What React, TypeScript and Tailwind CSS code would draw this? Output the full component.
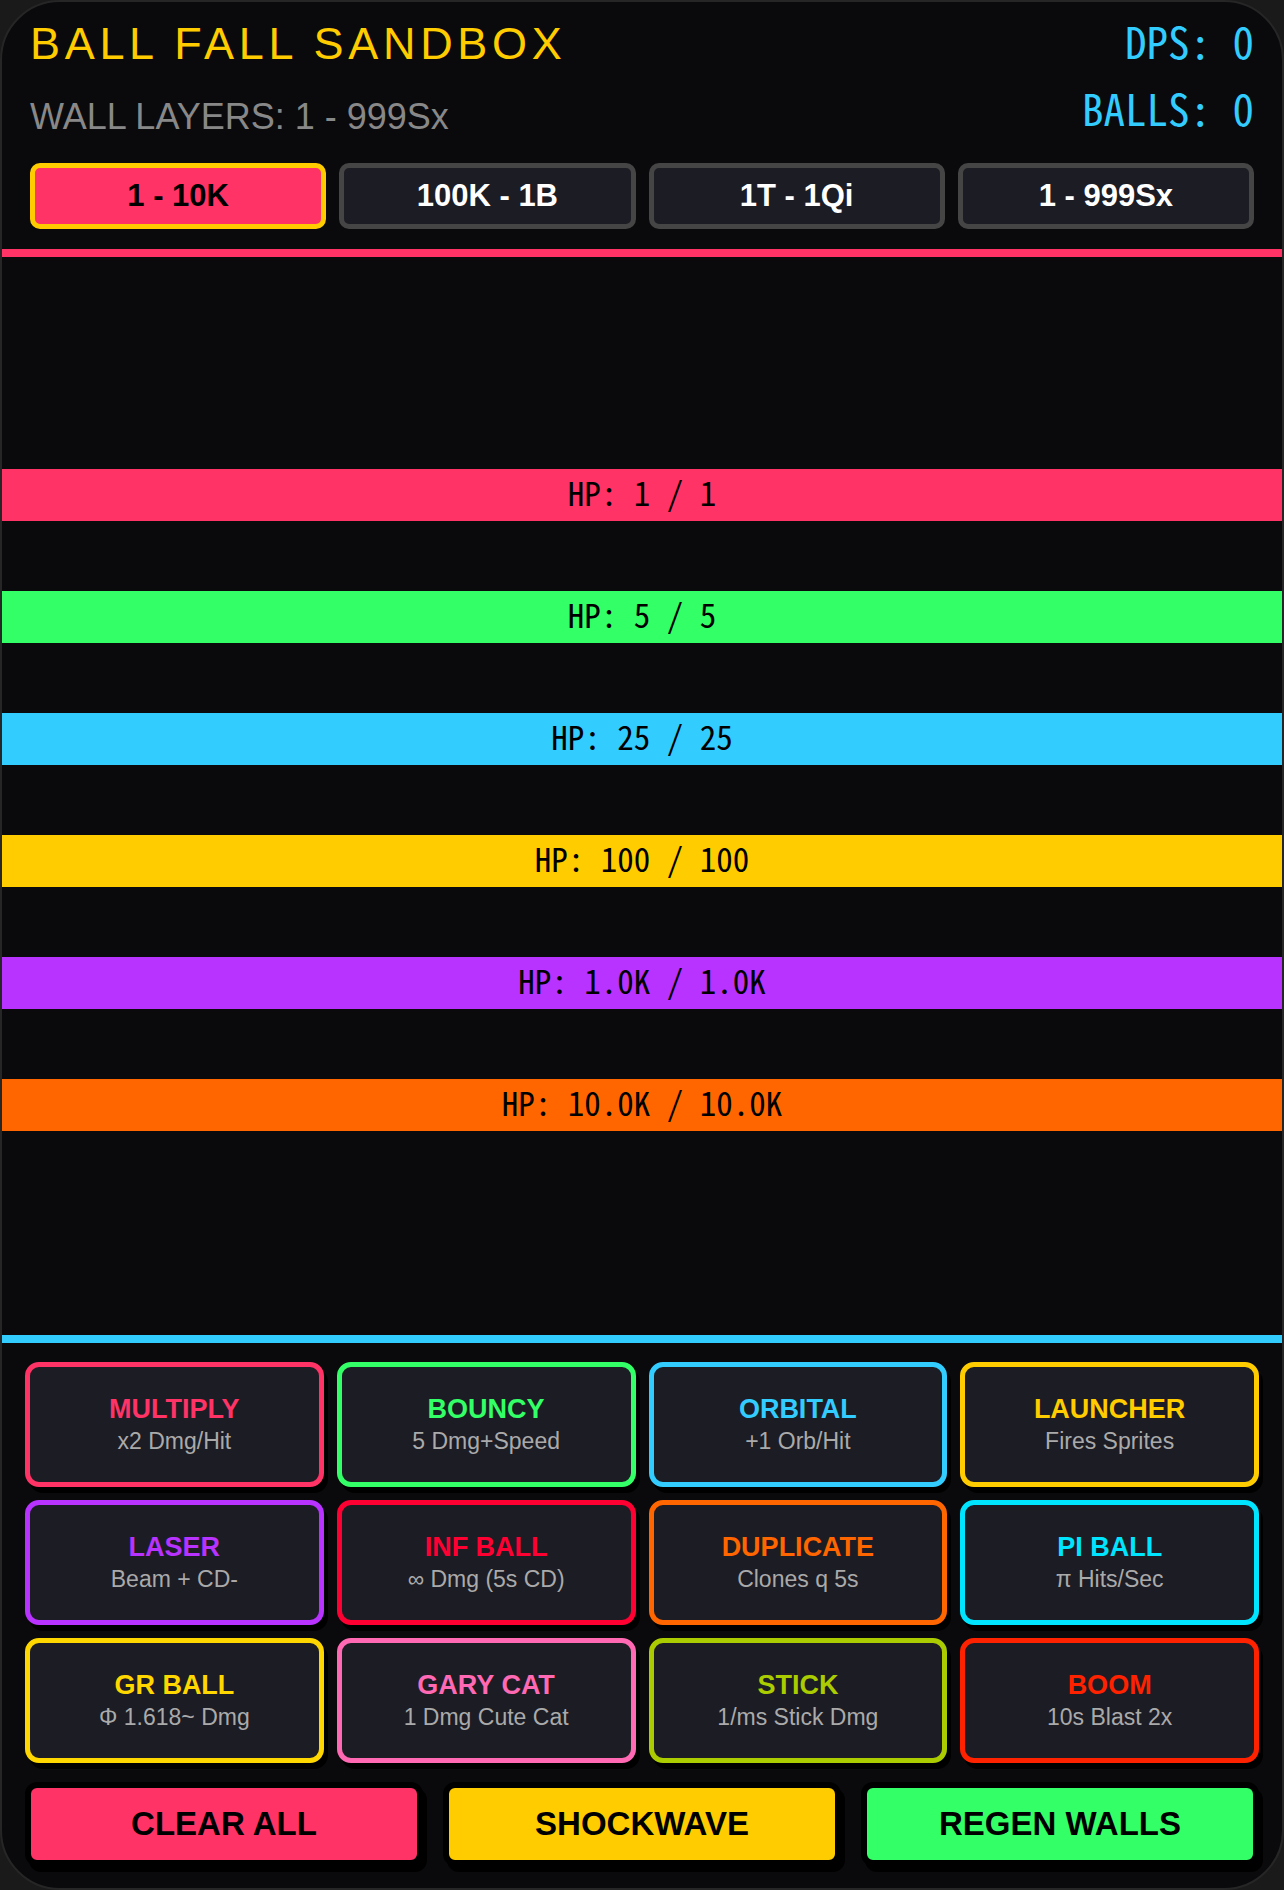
import React from "react";

const bars = [
  { c: "bg-[#ff3366]", t: "HP: 1 / 1" },
  { c: "bg-[#33ff66]", t: "HP: 5 / 5" },
  { c: "bg-[#33ccff]", t: "HP: 25 / 25" },
  { c: "bg-[#ffcc00]", t: "HP: 100 / 100" },
  { c: "bg-[#b833ff]", t: "HP: 1.0K / 1.0K" },
  { c: "bg-[#ff6600]", t: "HP: 10.0K / 10.0K" },
];

const cards = [
  { n: "MULTIPLY", d: "x2 Dmg/Hit", b: "border-[#ff3366]", t: "text-[#ff3366]" },
  { n: "BOUNCY", d: "5 Dmg+Speed", b: "border-[#33ff66]", t: "text-[#33ff66]" },
  { n: "ORBITAL", d: "+1 Orb/Hit", b: "border-[#33ccff]", t: "text-[#33ccff]" },
  { n: "LAUNCHER", d: "Fires Sprites", b: "border-[#ffcc00]", t: "text-[#ffcc00]" },
  { n: "LASER", d: "Beam + CD-", b: "border-[#b833ff]", t: "text-[#b833ff]" },
  { n: "INF BALL", d: "∞ Dmg (5s CD)", b: "border-[#ff0033]", t: "text-[#ff0033]" },
  { n: "DUPLICATE", d: "Clones q 5s", b: "border-[#ff6600]", t: "text-[#ff6600]" },
  { n: "PI BALL", d: "π Hits/Sec", b: "border-[#00e5ff]", t: "text-[#00e5ff]" },
  { n: "GR BALL", d: "Φ 1.618~ Dmg", b: "border-[#ffd700]", t: "text-[#ffd700]" },
  { n: "GARY CAT", d: "1 Dmg Cute Cat", b: "border-[#ff69b4]", t: "text-[#ff69b4]" },
  { n: "STICK", d: "1/ms Stick Dmg", b: "border-[#aacc00]", t: "text-[#aacc00]" },
  { n: "BOOM", d: "10s Blast 2x", b: "border-[#ff2200]", t: "text-[#ff2200]" },
];

const tabs = ["1 - 10K", "100K - 1B", "1T - 1Qi", "1 - 999Sx"];

export default function App() {
  return (
    <div className="w-[1284px] h-[1890px] bg-[#1a1a1a] font-['Liberation_Sans',Arial,sans-serif]">
      <div className="h-full rounded-[60px] border-2 border-[#262626] bg-[#0a0a0d] overflow-hidden flex flex-col">
        {/* header */}
        <div className="px-[28px] pt-[19px] pb-[20px]">
          <div className="flex justify-between items-start h-[116px]">
            <div className="flex flex-col">
              <div className="text-[45px] leading-[45px] tracking-[0.104em] text-[#ffcc00]">BALL FALL SANDBOX</div>
              <div className="mt-[31px] text-[36px] leading-[40px] text-[#888888]">WALL LAYERS: 1 - 999Sx</div>
            </div>
            <div className="flex flex-col items-end font-['Noto_Sans_Mono_CJK_SC','Noto_Sans_Mono_CJK_JP',monospace] text-[#33ccff] text-[43px]">
              <div className="leading-[48px] -mt-[5px]">DPS: 0</div>
              <div className="leading-[48px] mt-[19px]">BALLS: 0</div>
            </div>
          </div>
          <div className="mt-[26px] grid grid-cols-4 gap-[13px]">
            {tabs.map((t, i) => (
              <div
                key={t}
                className={
                  i === 0
                    ? "h-[66px] rounded-[10px] border-[5px] border-[#ffcc00] bg-[#ff3366] text-black font-bold text-[31px] flex items-center justify-center"
                    : "h-[66px] rounded-[10px] border-[5px] border-[#454545] bg-[#1c1c24] text-white font-bold text-[31px] flex items-center justify-center"
                }
              >
                {t}
              </div>
            ))}
          </div>
        </div>

        {/* game area */}
        <div className="relative flex-1 border-t-[8px] border-b-[8px] border-t-[#ff3366] border-b-[#33ccff] flex flex-col pt-[212px] gap-[70px] -mx-[2px]">
          {bars.map((b) => (
            <div
              key={b.t}
              className={`${b.c} h-[52px] pb-[6px] flex items-center justify-center font-['Noto_Sans_Mono_CJK_SC','Noto_Sans_Mono_CJK_JP',monospace] text-[33px] leading-[52px] text-black whitespace-pre`}
            >
              {b.t}
            </div>
          ))}
        </div>

        {/* panel */}
        <div className="px-[23px] pt-[19px] pb-[22px]">
          <div className="grid grid-cols-4 gap-[13px]">
            {cards.map((c) => (
              <div
                key={c.n}
                className={`h-[125px] rounded-[14px] border-[5px] ${c.b} bg-[#1c1c24] shadow-[4px_6px_0_#000] flex flex-col items-center justify-center`}
              >
                <div className={`${c.t} font-bold text-[27px] leading-[30px]`}>{c.n}</div>
                <div className="mt-[2px] text-[#aaaaaa] text-[23px] leading-[30px]">{c.d}</div>
              </div>
            ))}
          </div>
          <div className="mt-[19px] grid grid-cols-3 gap-[20px]">
            <div className="h-[84px] rounded-[12px] border-[6px] border-black bg-[#ff3366] shadow-[4px_6px_0_#000] flex items-center justify-center text-black font-bold text-[33px]">
              CLEAR ALL
            </div>
            <div className="h-[84px] rounded-[12px] border-[6px] border-black bg-[#ffcc00] shadow-[4px_6px_0_#000] flex items-center justify-center text-black font-bold text-[33px]">
              SHOCKWAVE
            </div>
            <div className="h-[84px] rounded-[12px] border-[6px] border-black bg-[#33ff66] shadow-[4px_6px_0_#000] flex items-center justify-center text-black font-bold text-[33px]">
              REGEN WALLS
            </div>
          </div>
        </div>
      </div>
    </div>
  );
}
